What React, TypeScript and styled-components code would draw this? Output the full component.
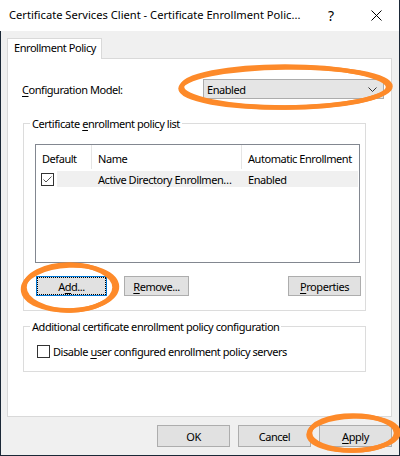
import React from "react";
import styled, { createGlobalStyle } from "styled-components";

const Global = createGlobalStyle`
  html, body { margin: 0; padding: 0; background: #ffffff; }
  body { font-family: "Segoe UI", "Noto Sans", sans-serif; font-size: 11px; letter-spacing: -0.45px; color: #000; }
  * { box-sizing: border-box; }
`;

const Window = styled.div`
  position: relative;
  width: 400px;
  height: 456px;
  display: flex;
  flex-direction: column;
  background: #f0f0f0;
  overflow: hidden;
`;

const TitleBar = styled.div`
  height: 31px;
  flex: none;
  display: flex;
  align-items: center;
  background: #ffffff;
  border-right: 1px solid #1b2837;
  padding-left: 9px;
`;

const TitleText = styled.div`
  flex: 1;
  min-width: 0;
  white-space: nowrap;
  font-size: 11.15px;
  letter-spacing: 0;
  line-height: 16px;
  padding-bottom: 1px;
`;

const TitleButton = styled.div<{ $w: number }>`
  width: ${(p) => p.$w}px;
  flex: none;
  height: 31px;
  display: flex;
  align-items: center;
  justify-content: center;
  font-size: 14px;
  letter-spacing: 0;
`;

const Body = styled.div`
  flex: 1;
  display: flex;
  flex-direction: column;
  border-left: 1px solid #1b2837;
  border-right: 1px solid #1b2837;
  border-bottom: 1px solid #1b2837;
  padding: 7px 7px 0 6px;
`;

const TabStrip = styled.div`
  display: flex;
  height: 20px;
  position: relative;
  z-index: 1;
`;

const Tab = styled.div`
  width: 95px;
  height: 21px;
  background: #ffffff;
  border: 1px solid #d9d9d9;
  border-bottom: none;
  padding-left: 6px;
  line-height: 18px;
  white-space: nowrap;
`;

const Panel = styled.div`
  height: 359px;
  background: #ffffff;
  border: 1px solid #d9d9d9;
  display: flex;
  flex-direction: column;
  padding: 20px 7px 0 14px;
`;

const ConfigRow = styled.div`
  display: flex;
  align-items: center;
  height: 20px;
`;

const Label = styled.div`
  flex: 1;
`;

const Combo = styled.div`
  width: 181px;
  height: 20px;
  background: #e5e5e5;
  border: 1px solid #acacac;
  display: flex;
  align-items: center;
  justify-content: space-between;
  padding: 0 6px 0 3px;
`;

const Group = styled.fieldset<{ $mt: number }>`
  margin: ${(p) => p.$mt}px 18px 0 1px;
  border: 1px solid #dcdcdc;
  padding: 0;
  min-width: 0;
`;

const Legend = styled.legend`
  padding: 0 2px;
  margin-left: 6px;
  line-height: 15px;
`;

const GroupBody = styled.div<{ $pad: string }>`
  padding: ${(p) => p.$pad};
`;

const ListView = styled.div`
  width: 325px;
  height: 119px;
  border: 1px solid #828790;
  background: #ffffff;
  display: flex;
  flex-direction: column;
`;

const Header = styled.div`
  display: flex;
  height: 24px;
`;

const HeadCell = styled.div<{ $w?: number }>`
  ${(p) => (p.$w ? `width: ${p.$w}px; flex: none;` : "flex: 1; min-width: 0;")}
  display: flex;
  align-items: center;
  padding: 2px 0 0 6px;
  border-right: 1px solid #e5e5e5;
  &:last-child { border-right: none; }
  white-space: nowrap;
  overflow: hidden;
`;

const Row = styled.div`
  display: flex;
  align-items: center;
  height: 16px;
  margin-top: 2px;
  padding-left: 5px;
  padding-right: 1px;
`;

const CheckBox = styled.div<{ $mr: number }>`
  width: 13px;
  height: 13px;
  border: 1px solid #333333;
  background: #ffffff;
  flex: none;
  margin-right: ${(p) => p.$mr}px;
  display: flex;
  align-items: center;
  justify-content: center;
`;

const RowBand = styled.div`
  flex: 1;
  height: 16px;
  display: flex;
  align-items: center;
  background: #f0f0f0;
`;

const Cell = styled.div<{ $w?: number; $pl: number }>`
  ${(p) => (p.$w ? `width: ${p.$w}px; flex: none;` : "flex: 1; min-width: 0;")}
  padding-left: ${(p) => p.$pl}px;
  white-space: nowrap;
  overflow: hidden;
`;

const ButtonRow = styled.div`
  display: flex;
  margin-top: 13px;
  width: 326px;
  padding-left: 1px;
`;

const Button = styled.div<{ $w: number; $h: number; $focus?: boolean; $ml?: number }>`
  width: ${(p) => p.$w}px;
  height: ${(p) => p.$h}px;
  flex: none;
  margin-left: ${(p) => (p.$ml === undefined ? 0 : p.$ml)}px;
  background: #e1e1e1;
  border: 1px solid ${(p) => (p.$focus ? "#0078d7" : "#adadad")};
  display: flex;
  align-items: center;
  justify-content: center;
  white-space: nowrap;
  ${(p) => (p.$focus ? "outline: 1px dotted #000; outline-offset: -2px;" : "")}
  &.right { margin-left: auto; }
`;

const CheckRow = styled.div`
  display: flex;
  align-items: center;
`;

const Footer = styled.div`
  display: flex;
  justify-content: flex-end;
  gap: 8px;
  margin-top: 8px;
`;

const Overlay = styled.svg`
  position: absolute;
  left: 0;
  top: 0;
  pointer-events: none;
`;

const U = styled.span`
  text-decoration: underline;
  text-underline-offset: 2px;
`;

export default function App() {
  return (
    <>
      <Global />
      <Window>
        <TitleBar>
          <TitleText>Certificate Services Client - Certificate Enrollment Polic...</TitleText>
          <TitleButton $w={46}>?</TitleButton>
          <TitleButton $w={45}>
            <svg width="11" height="11" viewBox="0 0 11 11">
              <path d="M0.5 0.5 L10.5 10.5 M10.5 0.5 L0.5 10.5" stroke="#000" strokeWidth="1" />
            </svg>
          </TitleButton>
        </TitleBar>
        <Body>
          <TabStrip>
            <Tab>Enrollment Policy</Tab>
          </TabStrip>
          <Panel>
            <ConfigRow>
              <Label>
                <U>C</U>onfiguration Model:
              </Label>
              <Combo>
                <span>Enabled</span>
                <svg width="9" height="5" viewBox="0 0 9 5">
                  <path d="M0.5 0.5 L4.5 4.5 L8.5 0.5" stroke="#333" fill="none" strokeWidth="1" />
                </svg>
              </Combo>
            </ConfigRow>
            <Group $mt={17}>
              <Legend>
                Certificate <U>e</U>nrollment policy list
              </Legend>
              <GroupBody $pad="13px 12px 14px 11px">
                <ListView>
                  <Header>
                    <HeadCell $w={56}>Default</HeadCell>
                    <HeadCell $w={150}>Name</HeadCell>
                    <HeadCell>Automatic Enrollment</HeadCell>
                  </Header>
                  <Row>
                    <CheckBox $mr={3}>
                      <svg width="11" height="11" viewBox="0 0 11 11">
                        <path d="M1.5 5.5 L4 8 L9.5 2.5" stroke="#555" fill="none" strokeWidth="1" />
                      </svg>
                    </CheckBox>
                    <RowBand>
                      <Cell $w={184} $pl={41}>Active Directory Enrollmen…</Cell>
                      <Cell $pl={7}>Enabled</Cell>
                    </RowBand>
                  </Row>
                </ListView>
                <ButtonRow>
                  <Button $w={71} $h={20} $focus>
                    <span>
                      A<U>d</U>d...
                    </span>
                  </Button>
                  <Button $w={65} $h={20} $ml={17}>
                    <span>
                      <U>R</U>emove...
                    </span>
                  </Button>
                  <Button $w={73} $h={20} className="right">
                    <span>
                      <U>P</U>roperties
                    </span>
                  </Button>
                </ButtonRow>
              </GroupBody>
            </Group>
            <Group $mt={8}>
              <Legend>Additional certificate enrollment policy configuration</Legend>
              <GroupBody $pad="10px 12px 12px 13px">
                <CheckRow>
                  <CheckBox $mr={3} />
                  <span>
                    Disable <U>u</U>ser configured enrollment policy servers
                  </span>
                </CheckRow>
              </GroupBody>
            </Group>
          </Panel>
          <Footer>
            <Button $w={73} $h={22}>OK</Button>
            <Button $w={73} $h={22}>Cancel</Button>
            <Button $w={73} $h={22}>
              <span>
                <U>A</U>pply
              </span>
            </Button>
          </Footer>
        </Body>
        <Overlay width="400" height="456" viewBox="0 0 400 456">
          <g fill="none" stroke="#fd8a2a" strokeWidth="4.5">
            <ellipse cx="285" cy="87" rx="103" ry="20.5" />
            <ellipse cx="285.5" cy="87.5" rx="105" ry="20" transform="rotate(-0.6 285 87)" />
            <ellipse cx="69.5" cy="287.5" rx="45" ry="23" />
            <ellipse cx="70" cy="288" rx="47" ry="22.5" transform="rotate(-2 70 288)" />
            <ellipse cx="353" cy="433" rx="43" ry="17.5" />
            <ellipse cx="353.5" cy="433.5" rx="45" ry="17" transform="rotate(-1.5 353 433)" />
          </g>
        </Overlay>
      </Window>
    </>
  );
}
